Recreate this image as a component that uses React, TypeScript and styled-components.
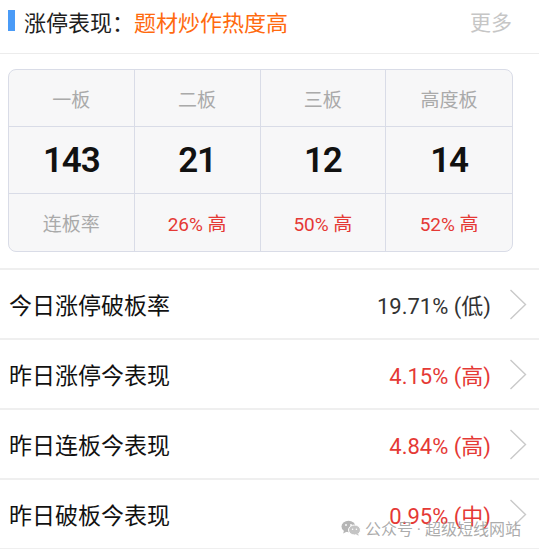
import React from "react";
import styled, { createGlobalStyle } from "styled-components";

const GlobalStyle = createGlobalStyle`
    html, body {
        margin: 0;
        padding: 0;
        background: #ffffff;
    }
    body {
        font-family: "Roboto", "Noto Sans CJK SC", sans-serif;
        color: #1a1a1a;
    }
`;

const Page = styled.div`
    position: relative;
    width: 539px;
    height: 549px;
    overflow: hidden;
    background: #ffffff;
`;

const Header = styled.div`
    display: flex;
    align-items: center;
    height: 41px;
    padding: 0 27px 12px 8px;
    border-bottom: 1px solid #ececec;
    font-size: 22px;
`;

const Marker = styled.span`
    width: 7px;
    height: 21px;
    margin-right: 9px;
    background: #4a9bf7;
`;

const Title = styled.span`
    color: #1e1e1e;
`;

const Highlight = styled.span`
    color: #ff6a0f;
`;

const More = styled.span`
    margin-left: auto;
    color: #c6c6c6;
    font-size: 21px;
`;

const TableWrap = styled.div`
    padding: 15px 26px 16px 8px;
`;

const Grid = styled.div`
    display: grid;
    grid-template-columns: repeat(4, 1fr);
    grid-template-rows: 57px 67px 57px;
    border: 1px solid #d9dce7;
    border-radius: 8px;
    background: #f7f7f8;
    overflow: hidden;
`;

const Cell = styled.div<{ $last?: boolean; $bottom?: boolean }>`
    display: flex;
    align-items: center;
    justify-content: center;
    border-right: ${(p) => (p.$last ? "none" : "1px solid #d9dce7")};
    border-bottom: ${(p) => (p.$bottom ? "none" : "1px solid #d9dce7")};
`;

const Label = styled.span`
    color: #aaaaaa;
    font-size: 19px;
`;

const Count = styled.span`
    color: #111111;
    font-size: 35px;
    font-weight: 600;
    letter-spacing: -1px;
`;

const Rate = styled.span`
    color: #e53935;
    font-size: 19px;
`;

const List = styled.div`
    border-top: 2px solid #efefef;
`;

const Row = styled.div`
    display: flex;
    align-items: center;
    height: 68px;
    padding-left: 9px;
    border-bottom: 2px solid #efefef;
`;

const RowLabel = styled.span`
    font-size: 23px;
    color: #111111;
`;

const RowValue = styled.span<{ $tone: "dark" | "red" }>`
    margin-left: auto;
    font-size: 22px;
    color: ${(p) => (p.$tone === "red" ? "#e53935" : "#333333")};
`;

const Chevron = styled.svg`
    width: 18px;
    height: 31px;
    margin: 0 12px 0 18px;
    flex: none;
`;

const Watermark = styled.div`
    position: absolute;
    right: 18px;
    bottom: 9px;
    display: flex;
    align-items: center;
    gap: 4px;
    font-size: 16px;
    color: rgba(150, 150, 150, 0.8);
`;

const heads = ["一板", "二板", "三板", "高度板"];
const counts = ["143", "21", "12", "14"];
const rates = ["26% 高", "50% 高", "52% 高"];

const rows: { label: string; value: string; tone: "dark" | "red" }[] = [
    { label: "今日涨停破板率", value: "19.71% (低)", tone: "dark" },
    { label: "昨日涨停今表现", value: "4.15% (高)", tone: "red" },
    { label: "昨日连板今表现", value: "4.84% (高)", tone: "red" },
    { label: "昨日破板今表现", value: "0.95% (中)", tone: "red" },
];

const Arrow = () => (
    <Chevron viewBox="0 0 18 31">
        <path d="M1.5 1 L16.5 15.5 L1.5 30" fill="none" stroke="#c9c9c9" strokeWidth="1.4" />
    </Chevron>
);

const WeChat = () => (
    <svg width="20" height="16" viewBox="0 0 20 16">
        <ellipse cx="7.5" cy="6.5" rx="7" ry="5.8" fill="#b5b5b5" />
        <path d="M3 10.5 L2.2 13.5 L6 11.6 Z" fill="#b5b5b5" />
        <ellipse cx="13.5" cy="10" rx="6" ry="5" fill="#c4c4c4" stroke="#fff" strokeWidth="1" />
        <path d="M17 13.5 L17.8 15.8 L15 14.6 Z" fill="#c4c4c4" />
        <circle cx="5" cy="5" r="0.9" fill="#fff" />
        <circle cx="10" cy="5" r="0.9" fill="#fff" />
        <circle cx="11.6" cy="9.2" r="0.8" fill="#fff" />
        <circle cx="15.4" cy="9.2" r="0.8" fill="#fff" />
    </svg>
);

const App = () => {
    return (
        <Page>
            <GlobalStyle />
            <Header>
                <Marker />
                <Title>涨停表现：</Title>
                <Highlight>题材炒作热度高</Highlight>
                <More>更多</More>
            </Header>
            <TableWrap>
                <Grid>
                    {heads.map((h, i) => (
                        <Cell key={h} $last={i === 3}>
                            <Label>{h}</Label>
                        </Cell>
                    ))}
                    {counts.map((c, i) => (
                        <Cell key={"c" + i} $last={i === 3}>
                            <Count>{c}</Count>
                        </Cell>
                    ))}
                    <Cell $bottom>
                        <Label>连板率</Label>
                    </Cell>
                    {rates.map((r, i) => (
                        <Cell key={r} $bottom $last={i === 2}>
                            <Rate>{r}</Rate>
                        </Cell>
                    ))}
                </Grid>
            </TableWrap>
            <List>
                {rows.map((r) => (
                    <Row key={r.label}>
                        <RowLabel>{r.label}</RowLabel>
                        <RowValue $tone={r.tone}>{r.value}</RowValue>
                        <Arrow />
                    </Row>
                ))}
            </List>
            <Watermark>
                <WeChat />
                <span>公众号 · 超级短线网站</span>
            </Watermark>
        </Page>
    );
};

export default App;
